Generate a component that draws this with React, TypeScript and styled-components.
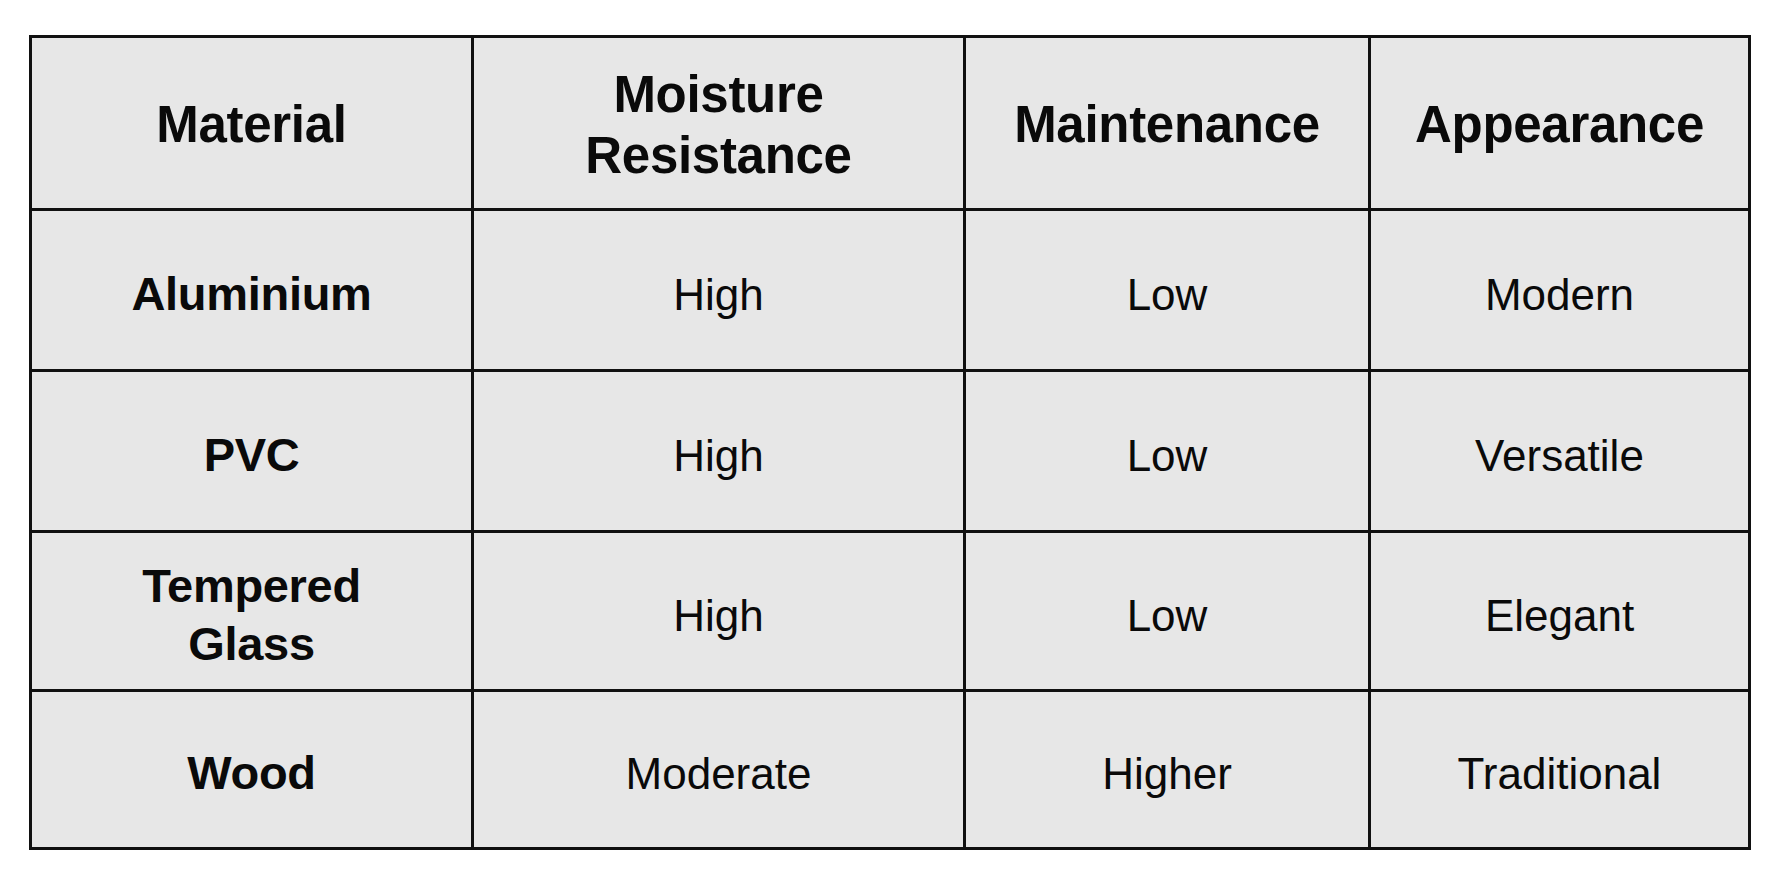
import * as React from "react";
import styled, { createGlobalStyle } from "styled-components";

const GlobalStyle = createGlobalStyle`
  html, body {
    margin: 0;
    padding: 0;
    background: #ffffff;
  }
  body {
    font-family: "Liberation Sans", Arial, sans-serif;
    color: #0a0a0a;
  }
`;

const Page = styled.div`
  width: 1774px;
  height: 887px;
  padding: 35px 0 0 29px;
  box-sizing: border-box;
`;

const Grid = styled.div`
  display: grid;
  width: 1722px;
  box-sizing: border-box;
  grid-template-columns: 439px 489px 402px 377px;
  grid-template-rows: 170px 158px 158px 156px 155px;
  gap: 3px;
  padding: 3px;
  background: #111111;
`;

type Kind = "head" | "label" | "value";

const sizes: Record<Kind, string> = { head: "51px", label: "47px", value: "44px" };
const offsets: Record<Kind, string> = { head: "3px", label: "7px", value: "9px" };

const Cell = styled.div<{ $kind: Kind }>`
  display: flex;
  align-items: center;
  justify-content: center;
  text-align: center;
  background: #e7e7e7;
  font-weight: ${(p) => (p.$kind === "value" ? 400 : 700)};
  font-size: ${(p) => sizes[p.$kind]};
  line-height: ${(p) => (p.$kind === "head" ? "61px" : "58px")};
  letter-spacing: ${(p) => (p.$kind === "value" ? "0" : "-0.3px")};
  padding-top: ${(p) => offsets[p.$kind]};
  box-sizing: border-box;
`;

const headers = ["Material", "Moisture\nResistance", "Maintenance", "Appearance"];

const rows = [
  ["Aluminium", "High", "Low", "Modern"],
  ["PVC", "High", "Low", "Versatile"],
  ["Tempered\nGlass", "High", "Low", "Elegant"],
  ["Wood", "Moderate", "Higher", "Traditional"],
];

const Lines: React.FC<{ text: string }> = ({ text }) => (
  <span>
    {text.split("\n").map((line, i) => (
      <React.Fragment key={i}>
        {i > 0 && <br />}
        {line}
      </React.Fragment>
    ))}
  </span>
);

export default function App() {
  return (
    <>
      <GlobalStyle />
      <Page>
        <Grid>
          {headers.map((h) => (
            <Cell key={h} $kind="head">
              <Lines text={h} />
            </Cell>
          ))}
          {rows.map((row) =>
            row.map((value, i) => (
              <Cell key={row[0] + i} $kind={i === 0 ? "label" : "value"}>
                <Lines text={value} />
              </Cell>
            ))
          )}
        </Grid>
      </Page>
    </>
  );
}
